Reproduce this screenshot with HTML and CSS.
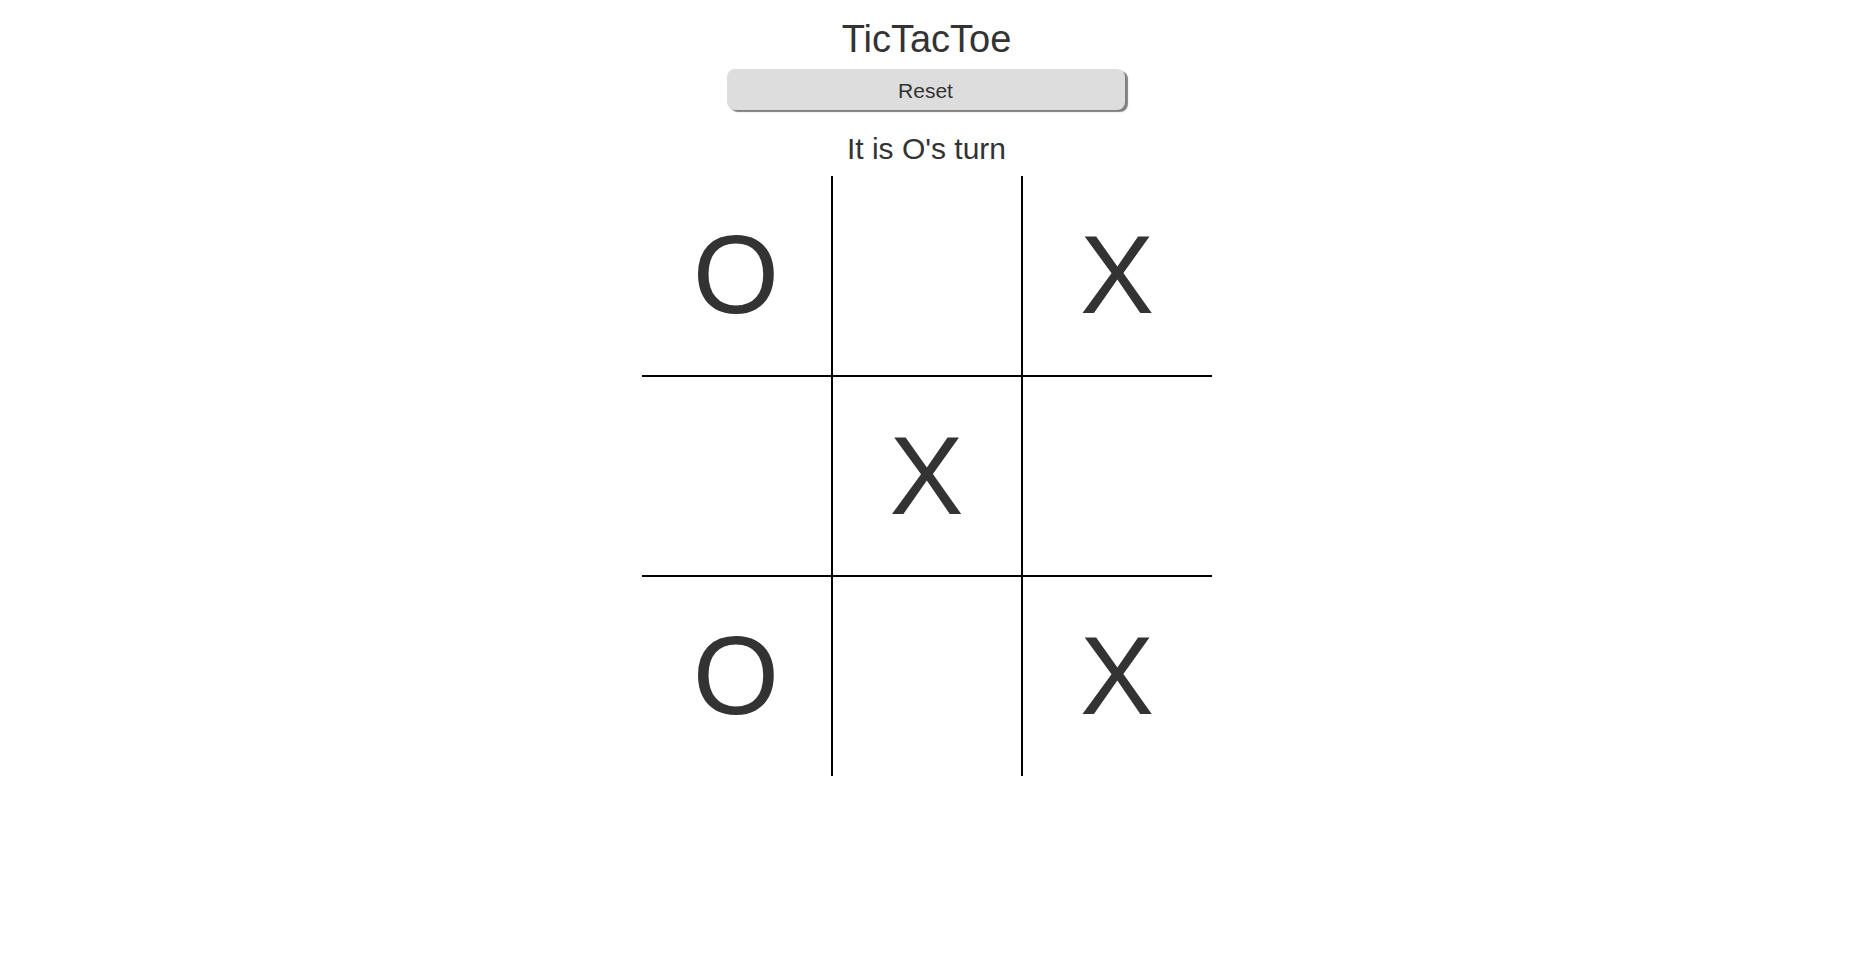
FILE: index.html
```html
<!DOCTYPE html>
<html lang="en">
<head>
<meta charset="utf-8">
<title>TicTacToe</title>
<link rel="stylesheet" href="styles.css">
</head>
<body>
<div class="app">
  <h1 class="title">TicTacToe</h1>
  <button class="reset" type="button">Reset</button>
  <div class="status">It is O's turn</div>
  <div class="board">
    <div class="cell">O</div>
    <div class="cell"></div>
    <div class="cell">X</div>
    <div class="cell"></div>
    <div class="cell">X</div>
    <div class="cell"></div>
    <div class="cell">O</div>
    <div class="cell"></div>
    <div class="cell">X</div>
  </div>
</div>
</body>
</html>
```
FILE: styles.css
```css
html, body {
  margin: 0;
  padding: 0;
  background: #ffffff;
}

body {
  font-family: "Liberation Sans", Arial, sans-serif;
  color: #333333;
}

.app {
  display: flex;
  flex-direction: column;
  align-items: center;
  padding-top: 18px;
}

.title {
  margin: 0;
  font-size: 38px;
  line-height: 43px;
  font-weight: normal;
}

.reset {
  margin: 8px 2px 0 0;
  width: 398px;
  height: 41px;
  padding: 3px 0 0;
  background: #dddddd;
  border: none;
  border-radius: 8px;
  box-shadow: 3px 2px 1px #808080;
  font-family: "Liberation Sans", Arial, sans-serif;
  font-size: 21px;
  color: #333333;
}

.status {
  margin-top: 22px;
  font-size: 30px;
  line-height: 34px;
}

.board {
  margin-top: 10px;
  width: 570px;
  display: grid;
  grid-template-columns: 191px 190px 189px;
  grid-template-rows: 201px 200px 199px;
}

.cell {
  box-sizing: border-box;
  display: flex;
  align-items: center;
  justify-content: center;
  font-size: 111px;
  line-height: 1;
  color: #333333;
}

.cell:nth-child(-n+6) {
  border-bottom: 2px solid #000000;
}

.cell:nth-child(3n+1),
.cell:nth-child(3n+2) {
  border-right: 2px solid #000000;
}
```
